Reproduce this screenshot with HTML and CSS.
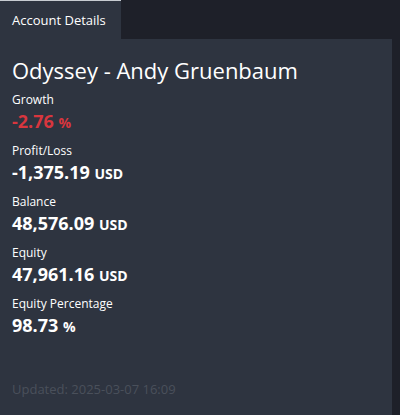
FILE: index.html
```html
<!DOCTYPE html>
<html>
<head>
<meta charset="utf-8">
<link rel="stylesheet" href="styles.css">
</head>
<body>
<div class="tabs">
  <div class="tab">Account Details</div>
</div>
<div class="panel">
  <h1 class="title">Odyssey - Andy Gruenbaum</h1>
  <div class="stat">
    <div class="label">Growth</div>
    <div class="value neg">-2.76 <span class="unit">%</span></div>
  </div>
  <div class="stat">
    <div class="label">Profit/Loss</div>
    <div class="value">-1,375.19 <span class="unit">USD</span></div>
  </div>
  <div class="stat">
    <div class="label">Balance</div>
    <div class="value">48,576.09 <span class="unit">USD</span></div>
  </div>
  <div class="stat">
    <div class="label">Equity</div>
    <div class="value">47,961.16 <span class="unit">USD</span></div>
  </div>
  <div class="stat">
    <div class="label">Equity Percentage</div>
    <div class="value">98.73 <span class="unit">%</span></div>
  </div>
  <div class="updated">Updated: 2025-03-07 16:09</div>
</div>
</body>
</html>
```
FILE: styles.css
```css
html, body {
  margin: 0;
  padding: 0;
  background: #1e2029;
  height: 415px;
  overflow: hidden;
}
body {
  font-family: "Open Sans", "Noto Sans", sans-serif;
  color: #ffffff;
  width: 392px;
}
.tabs {
  display: flex;
  height: 39px;
}
.tab {
  width: 121px;
  box-sizing: border-box;
  background: #2e3440;
  border-top: 1px solid #c8ccd2;
  padding: 10px 0 0 12px;
  font-size: 13px;
  line-height: 18px;
}
.panel {
  background: #2e3440;
  height: 376px;
  padding: 15px 12px 0;
  box-sizing: border-box;
  display: flex;
  flex-direction: column;
}
.title {
  margin: 0 0 5px;
  font-size: 22px;
  font-weight: 400;
  line-height: 32px;
}
.stat {
  height: 51px;
}
.label {
  font-size: 12px;
  line-height: 17px;
}
.value {
  font-size: 18px;
  font-weight: 700;
  line-height: 26px;
}
.value.neg {
  color: #d9363e;
}
.unit {
  font-size: 14px;
}
.updated {
  margin-top: auto;
  margin-bottom: 17px;
  font-size: 13px;
  color: #4a505b;
}
```
